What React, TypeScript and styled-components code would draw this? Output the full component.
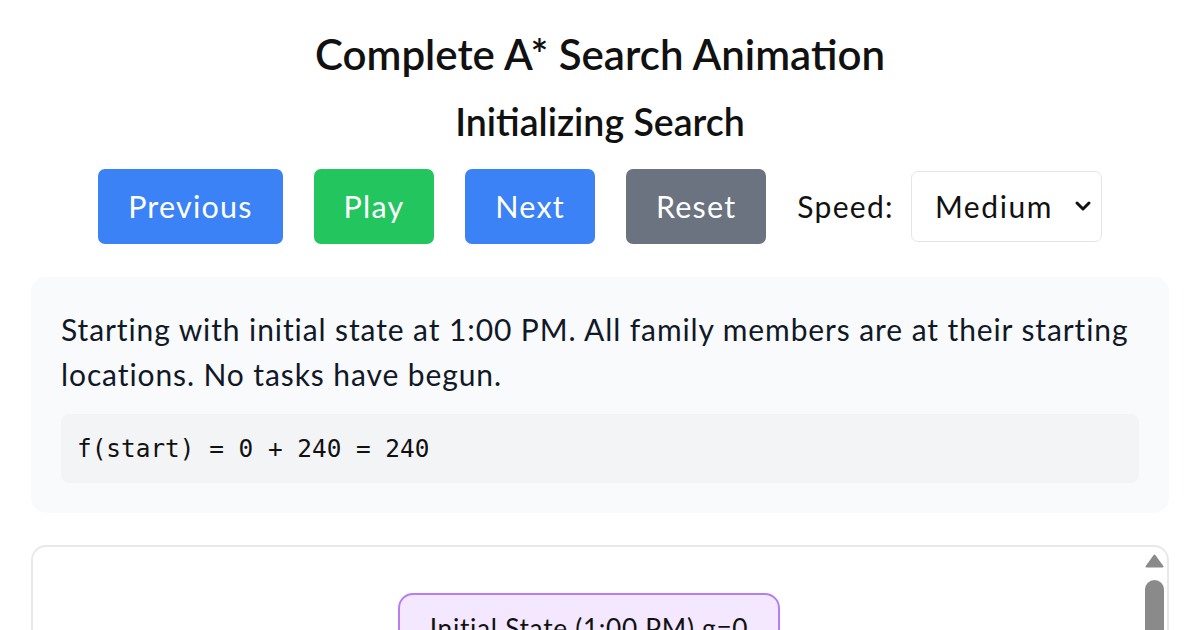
import React, { useState } from "react";
import styled, { createGlobalStyle } from "styled-components";

const Global = createGlobalStyle`
  * { box-sizing: border-box; }
  html, body { margin: 0; padding: 0; background: #ffffff; }
  body {
    font-family: Lato, "Noto Sans", "Liberation Sans", sans-serif;
    color: #111111;
    overflow: hidden;
  }
`;

const Page = styled.div`
  padding: 24px 31px 30px;
  display: flex;
  flex-direction: column;
`;

const Title = styled.h1`
  margin: 0;
  text-align: center;
  font-size: 42px;
  line-height: 60px;
  font-weight: 600;
  color: #111111;
`;

const Subtitle = styled.h2`
  margin: 12px 0 0;
  text-align: center;
  font-size: 37.5px;
  line-height: 52.5px;
  font-weight: 600;
  color: #111111;
`;

const Controls = styled.div`
  margin-top: 20px;
  display: flex;
  justify-content: center;
  align-items: center;
  gap: 31px;
`;

const Button = styled.button<{ $tone: "blue" | "green" | "gray" }>`
  font-family: inherit;
  font-size: 30.5px;
  letter-spacing: 1.2px;
  line-height: 45px;
  padding: 15px 30px;
  border: none;
  border-radius: 7px;
  color: #ffffff;
  cursor: pointer;
  background: ${(p) =>
    p.$tone === "blue" ? "#3b82f6" : p.$tone === "green" ? "#22c55e" : "#6b7280"};
`;

const SpeedGroup = styled.label`
  display: flex;
  align-items: center;
  gap: 17px;
  font-size: 30px;
  letter-spacing: 1.3px;
  line-height: 45px;
  color: #111111;
`;

const SelectWrap = styled.div`
  position: relative;
  display: flex;
`;

const Select = styled.select`
  appearance: none;
  -webkit-appearance: none;
  font-family: inherit;
  font-size: 30px;
  letter-spacing: 1.6px;
  line-height: 45px;
  height: 71px;
  width: 191px;
  padding: 0 30px 0 23px;
  border: 1.5px solid #e3e5e8;
  border-radius: 7px;
  background: #ffffff;
  color: #111111;
`;

const Chevron = styled.svg`
  position: absolute;
  right: 10px;
  top: 28px;
  width: 18px;
  height: 14px;
  pointer-events: none;
`;

const InfoBox = styled.section`
  margin-top: 33px;
  background: #f8fafc;
  border-radius: 15px;
  padding: 30px;
`;

const Description = styled.p`
  margin: 0 0 17px;
  font-size: 30px;
  letter-spacing: 0.9px;
  line-height: 45px;
  color: #111827;
`;

const Code = styled.div`
  background: #f3f4f6;
  border-radius: 8px;
  padding: 15px 16px;
  font-family: "DejaVu Sans Mono", "Liberation Mono", monospace;
  font-size: 24.4px;
  line-height: 39px;
  color: #111111;
`;

const TreePanel = styled.div`
  margin-top: 32px;
  height: 420px;
  border: 2px solid #e8e9ec;
  border-radius: 15px;
  display: flex;
  overflow: hidden;
`;

const TreeViewport = styled.div`
  flex: 1;
  overflow: hidden;
  padding: 46px 30px 30px;
`;

const ScrollRail = styled.div`
  width: 19px;
  margin-right: 3px;
  padding-top: 7px;
  display: flex;
  flex-direction: column;
  align-items: center;
  gap: 12px;
`;

const ScrollArrow = styled.svg`
  width: 19px;
  height: 14px;
  display: block;
`;

const ScrollThumb = styled.div`
  width: 19px;
  height: 260px;
  border-radius: 10px;
  background: #8a8a8a;
`;

const Tree = styled.div`
  display: flex;
  flex-direction: column;
  align-items: center;
  gap: 75px;
`;

const Level = styled.div`
  display: flex;
  justify-content: center;
  gap: 30px;
`;

const Node = styled.div<{ $kind: "start" | "open" }>`
  padding: 15px 30px;
  border-radius: 15px;
  border: 2px solid ${(p) => (p.$kind === "start" ? "#b77ef2" : "#93c5fd")};
  background: ${(p) => (p.$kind === "start" ? "#f3e8ff" : "#eff6ff")};
  font-size: 26.25px;
  letter-spacing: 0.7px;
  line-height: 37.5px;
  color: #111111;
  text-align: center;
  white-space: nowrap;
`;

export default function App() {
  const [speed, setSpeed] = useState("medium");
  return (
    <>
      <Global />
      <Page>
        <Title>Complete A* Search Animation</Title>
        <Subtitle>Initializing Search</Subtitle>
        <Controls>
          <Button $tone="blue">Previous</Button>
          <Button $tone="green">Play</Button>
          <Button $tone="blue">Next</Button>
          <Button $tone="gray">Reset</Button>
          <SpeedGroup>
            Speed:
            <SelectWrap>
              <Select value={speed} onChange={(e) => setSpeed(e.target.value)}>
                <option value="slow">Slow</option>
                <option value="medium">Medium</option>
                <option value="fast">Fast</option>
              </Select>
              <Chevron viewBox="0 0 18 14">
                <path d="M3 4 L9 10 L15 4" fill="none" stroke="#111" strokeWidth="3" strokeLinecap="round" strokeLinejoin="round" />
              </Chevron>
            </SelectWrap>
          </SpeedGroup>
        </Controls>
        <InfoBox>
          <Description>
            Starting with initial state at 1:00 PM. All family members are at their starting
            locations. No tasks have begun.
          </Description>
          <Code>f(start) = 0 + 240 = 240</Code>
        </InfoBox>
        <TreePanel>
          <TreeViewport>
            <Tree>
              <Node $kind="start">Initial State (1:00 PM) g=0</Node>
              <Level>
                <Node $kind="open">Task A (1:30 PM)</Node>
                <Node $kind="open">Task B (1:45 PM)</Node>
              </Level>
              <Level>
                <Node $kind="open">Task C (2:15 PM)</Node>
                <Node $kind="open">Task D (2:30 PM)</Node>
              </Level>
            </Tree>
          </TreeViewport>
          <ScrollRail>
            <ScrollArrow viewBox="0 0 19 14">
              <path d="M9.5 1.5 L17.5 12.5 L1.5 12.5 Z" fill="#8a8a8a" stroke="#8a8a8a" strokeWidth="2" strokeLinejoin="round" />
            </ScrollArrow>
            <ScrollThumb />
          </ScrollRail>
        </TreePanel>
      </Page>
    </>
  );
}
